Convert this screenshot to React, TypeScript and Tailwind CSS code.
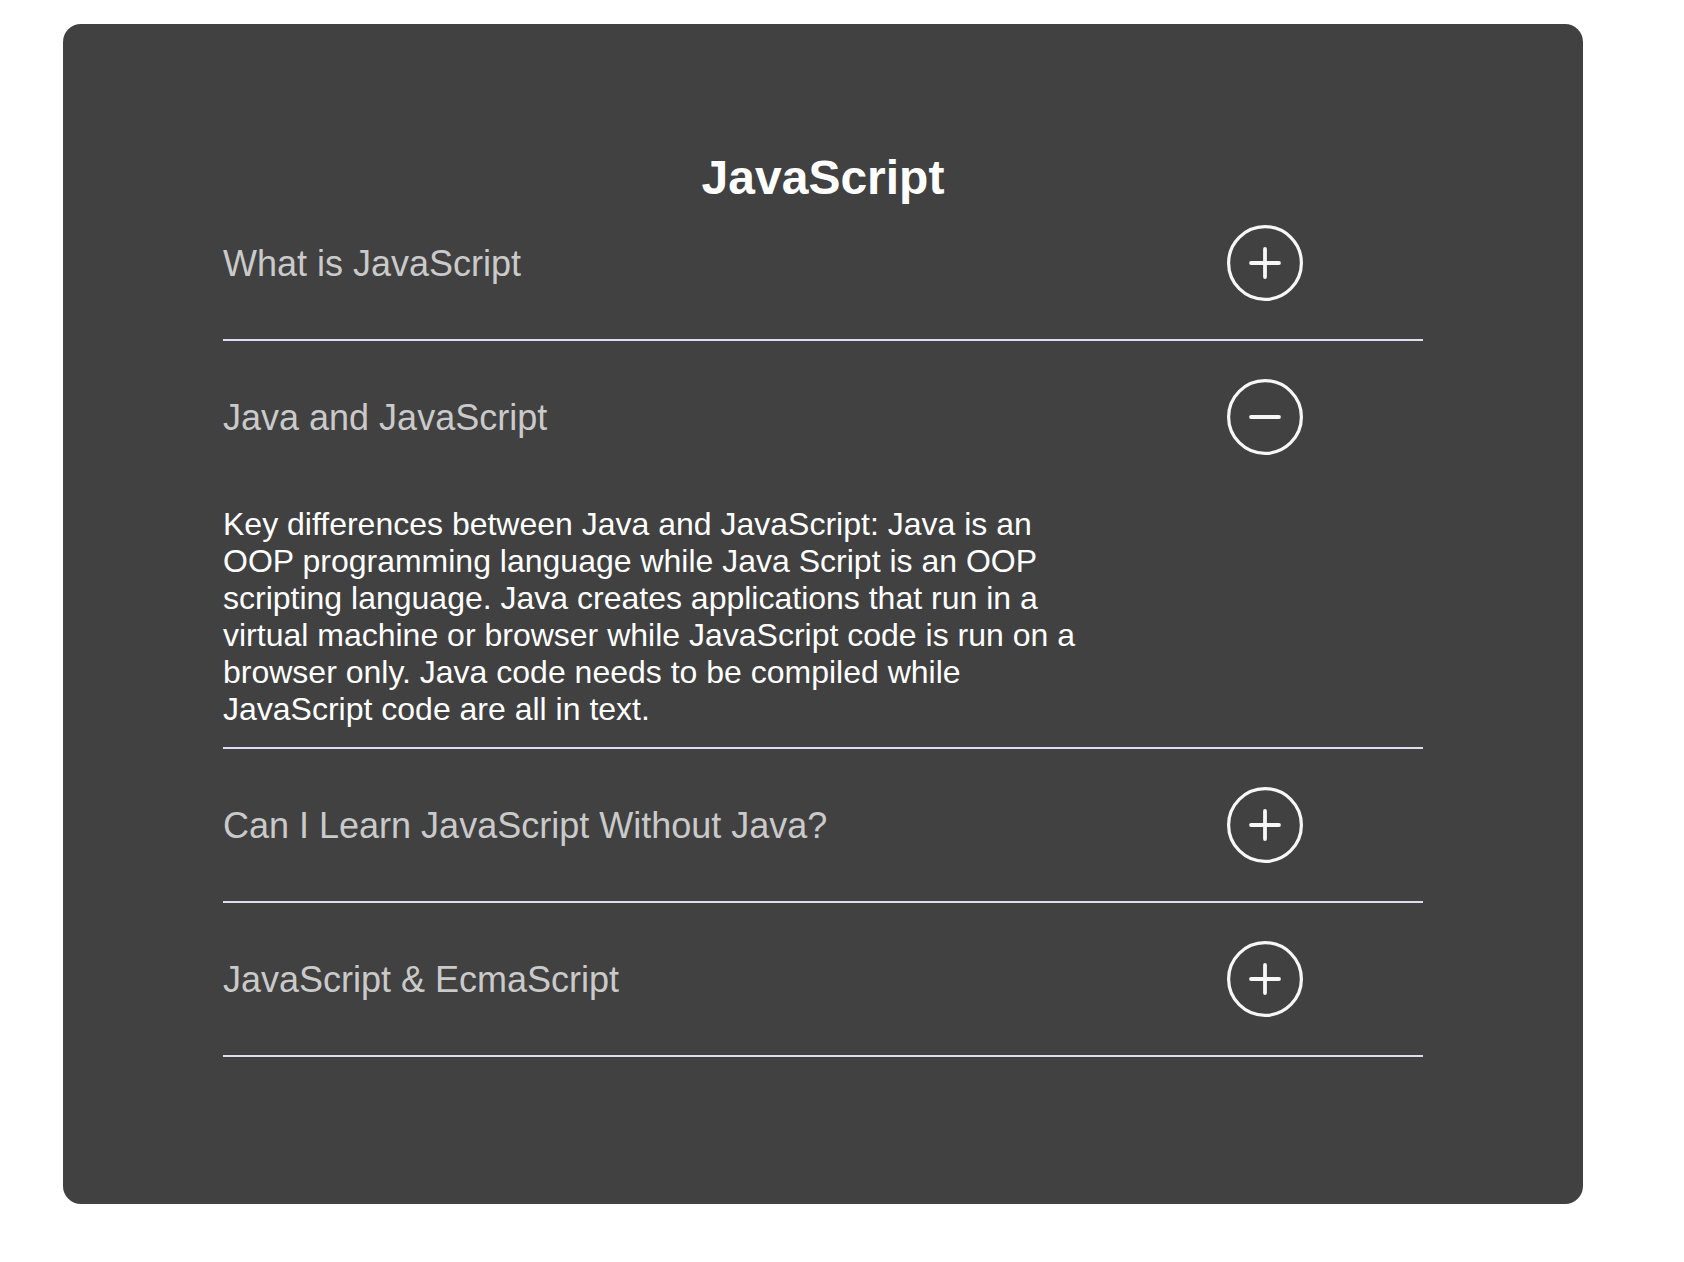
import { useState } from 'react';

const faqs = [
  {
    question: 'What is JavaScript',
    answer:
      'JavaScript is a scripting language used to create and control dynamic website content, such as animated graphics, interactive maps and much more.',
  },
  {
    question: 'Java and JavaScript',
    answer:
      'Key differences between Java and JavaScript: Java is an OOP programming language while Java Script is an OOP scripting language. Java creates applications that run in a virtual machine or browser while JavaScript code is run on a browser only. Java code needs to be compiled while JavaScript code are all in text.',
  },
  {
    question: 'Can I Learn JavaScript Without Java?',
    answer: 'Yes. JavaScript and Java are separate languages, you can learn JavaScript on its own.',
  },
  {
    question: 'JavaScript & EcmaScript',
    answer: 'EcmaScript is the standard that JavaScript implements.',
  },
];

function ToggleIcon({ open }: { open: boolean }) {
  return (
    <svg width="76" height="76" viewBox="0 0 76 76" fill="none" className="shrink-0">
      <circle cx="38" cy="38" r="36.4" stroke="#f7f7f8" strokeWidth="3.2" />
      <line x1="24" y1="38" x2="52" y2="38" stroke="#f7f7f8" strokeWidth="3.8" strokeLinecap="round" />
      {!open && <line x1="38" y1="24" x2="38" y2="52" stroke="#f7f7f8" strokeWidth="3.8" strokeLinecap="round" />}
    </svg>
  );
}

export default function App() {
  const [openIndex, setOpenIndex] = useState<number | null>(1);

  return (
    <div className="min-h-[1262px] bg-white pt-[24px] pl-[63px]" style={{ fontFamily: '"Liberation Sans", Arial, Helvetica, sans-serif' }}>
      <div className="w-[1520px] rounded-[18px] bg-[#414141] px-[160px] pt-[130px] pb-[147px]">
        <h1 className="text-center text-[48px] font-bold leading-[48px] text-white -mb-[15px]">JavaScript</h1>
        <div>
          {faqs.map((faq, i) => {
            const open = openIndex === i;
            return (
              <div key={faq.question} className="border-b-2 border-[#dcdfee]">
                <button
                  type="button"
                  onClick={() => setOpenIndex(open ? null : i)}
                  className="flex w-full items-center justify-between py-[38px] pr-[120px] text-left"
                >
                  <span className="pt-[2px] text-[36px] leading-[40px] text-[#cacaca]">{faq.question}</span>
                  <ToggleIcon open={open} />
                </button>
                {open && (
                  <p className="w-[870px] pt-[13px] pb-[19px] text-[32px] leading-[37px] text-white">{faq.answer}</p>
                )}
              </div>
            );
          })}
        </div>
      </div>
    </div>
  );
}
